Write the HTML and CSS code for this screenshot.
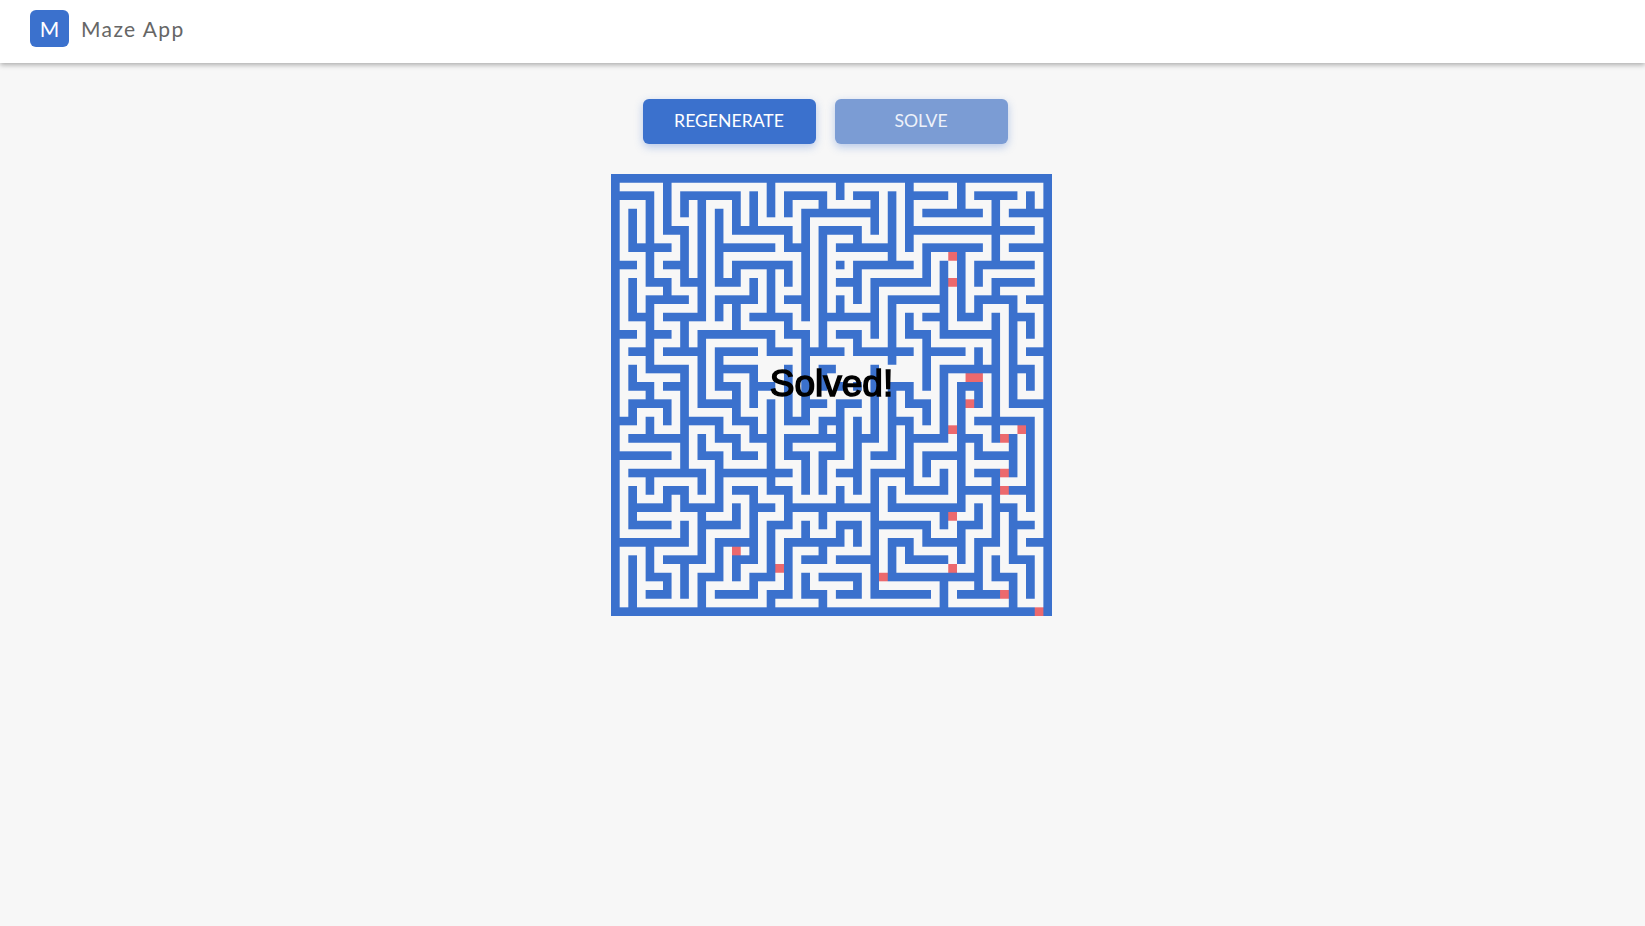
FILE: index.html
```html
<!DOCTYPE html>
<html lang="en">
<head>
    <meta charset="UTF-8">
    <meta name="viewport" content="width=device-width, initial-scale=1.0">
    <title>Maze App</title>
    <link rel="stylesheet" href="styles.css">
</head>
<body>

    <header class="topbar">
        <div class="logo">M</div>
        <span class="app-name">Maze App</span>
    </header>

    <main class="content">
        <div class="actions">
            <button class="btn">REGENERATE</button>
            <button class="btn btn-disabled">SOLVE</button>
        </div>

        <div class="maze-box">
            <canvas id="maze" width="510" height="510"></canvas>
            <div class="solved-label">Solved!</div>
        </div>
    </main>

    <script src="maze.js"></script>
</body>
</html>
```

FILE: styles.css
```css
body {
    margin: 0;
    min-height: 926px;
    background-color: #f7f7f7;
    font-family: "Lato", sans-serif;
}
.topbar {
    display: flex;
    align-items: center;
    height: 63px;
    padding-left: 30px;
    padding-bottom: 6px;
    box-sizing: border-box;
    background-color: #ffffff;
    box-shadow: 0 2px 5px rgba(0, 0, 0, 0.3);
}
.logo {
    display: flex;
    align-items: center;
    justify-content: center;
    width: 39px;
    height: 37px;
    border-radius: 6px;
    background-color: #3b71cd;
    color: #ffffff;
    font-size: 21px;
}
.app-name {
    margin-left: 12px;
    color: #666666;
    font-size: 21px;
    letter-spacing: 1.4px;
}
.content {
    display: flex;
    flex-direction: column;
    align-items: center;
}
.actions {
    display: flex;
    gap: 19px;
    margin-top: 36px;
    margin-left: 5px;
}
.btn {
    width: 173px;
    height: 45px;
    padding: 0 0 2px;
    border: none;
    border-radius: 6px;
    background-color: #3b71cd;
    color: #ffffff;
    font-family: "Lato", sans-serif;
    font-size: 17.6px;
    box-shadow: 0 3px 9px rgba(59, 113, 205, 0.35);
}
.btn-disabled {
    background-color: #7b9cd4;
    color: #eef2fa;
}
.maze-box {
    position: relative;
    width: 441.6px;
    height: 441.6px;
    margin-top: 30.4px;
    margin-left: 18px;
}
#maze {
    display: block;
    width: 100%;
    height: 100%;
}
.solved-label {
    position: absolute;
    top: 190px;
    left: 0;
    right: 0;
    text-align: center;
    color: #000000;
    font-family: "Liberation Sans", Arial, sans-serif;
    font-size: 37px;
    line-height: 40px;
    -webkit-text-stroke: 1.5px #000000;
}
```

FILE: maze.js
```js
// # wall, . corridor, R visited square
const rows = [
    "##########################" + "#########################",
    "#.....#...........#......." + "#.......#.....#.........#",
    "#####.#.#######.#.#.#####." + "#.###.#.#####.#.#####.#.#",
    "#...#.#.#.#...#.#.#.#...#." + "....#.#.#.....#...#...#.#",
    "#.#.#.#.#.#.#.#.#.#.#.####" + "#####.#.#.#######.#.#####",
    "#.#.#.#...#.#.#.#.....#..." + "....#.#.#.........#.....#",
    "#.#.#.###.#.#.#######.#.##" + "###.#.#.###############.#",
    "#.#.#...#.#.#.......#.#.#." + "..#...#.#.........#.....#",
    "#.#####.#.#.#######.###.#." + "#######.#.#######.#.#####",
    "#...#...#.#.#.........#.#." + "......#...#..R#...#.....#",
    "###.#.###.#.#.#######.#.#." + "#.#######.#.#.#.#######.#",
    "#...#...#.#.#.#...#.#.#.#." + "..#.......#.#.#.#.......#",
    "#.#.###.###.###.#.#.#.#.#." + "###.#######.#R#.#.#####.#",
    "#.#...#...#.....#.#...#.#." + "..#.#.......#.#...#.....#",
    "#.#.#####.#.#####.#.###.#." + "#.#.#.#######.#.#####.###",
    "#.#.#.....#.#.#...#...#.#." + "#...#.#.....#.#.#...#...#",
    "#.###.#####.#.#.#####.#.##" + "#####.#.#.###.###.#.###.#",
    "#...#...#.....#.....#...#." + "....#.#.#...#.....#.#.#.#",
    "###.###.#.#########.###.#." + "###.#.#.###.#######.#.#.#",
    "#...#...#.#.......#...#.#." + "..#...#...#.......#.#...#",
    "#.###.#####.#####.###.####" + "#.#######.#####.#.#.#.###",
    "#...#.....#.#.........#..." + "......#...#.....#.#.#...#",
    "#.#.#####.#.#####...#.#.##" + "....#.....#.#######.###.#",
    "#.#.....#.#.#...#...#.#.#." + "....#.....#.#..RR.#.#.#.#",
    "#.###.###.#.###.###.#.#.#." + "#.#.#.###.#.#.###.#.#.#.#",
    "#...#...#.#...#.#...#.#..." + "....#.#.#...#.#.#.#.#...#",
    "#.#####.#.#####.#.#.#.###." + "###.#.#.###.#.#R#.#.#####",
    "#.#...#.#.....#...#.#.#..." + "#...#.#...#.#.#...#.....#",
    "###.#.#.#####.###.#.###.##" + "#.#.#.###.#.#.#.#######.#",
    "#...#...#...#...#.#.....#." + "#.#.#.#.#...#R#...#..R#.#",
    "#.#######.#.###.###.######" + "#.###.#.#####.###.#R#.#.#",
    "#.......#.#...#...#.#....." + "#.#...#.#.....#.#...#.#.#",
    "#######.#.###.###.#.###.##" + "#.#.###.#.#####.#####.#.#",
    "#.......#...#.....#...#.#." + "..#.....#.#...#.....#.#.#",
    "#.#########.#########.#.#." + "###.#####.#.#.#.###R#.#.#",
    "#...#.....#.#.....#...#.#." + "..#.#...#...#.#...#...#.#",
    "#.#.#.###.#.#.###.###.#.#." + "#.#.#.#.#####.#####R###.#",
    "#.#...#.#...#...#...#....." + "#...#.#.......#...#...#.#",
    "#.#####.#####.#.###.######" + "#####.#########.#.###.#.#",
    "#.#.......#...#.#...#...#." + "....#.......#R..#.#.#...#",
    "#.#####.#.#####.#.###.#.#." + "###.#######.#.###.#.###.#",
    "#.......#.#.....#.#...#..." + "#.#.#.....#...#...#.#...#",
    "#########.#.#####.#.######" + "#.#.#.###.#####.###.#.###",
    "#...#.....#.#.R.#.#.#...#." + "....#.#.#.....#.#...#...#",
    "#.#.#.#####.#.###.#.#.###." + "#####.#.#####.#.#.#.###.#",
    "#.#.#...#...#.#...#R#....." + "....#.#......R..#.#...#.#",
    "#.#.###.#.###.#.###.#.#.##" + "###.#R###########.###.#.#",
    "#.#...#.#.#.....#...#.#..." + "..#.#.......#...#...#.#.#",
    "#.#.###.#.#.#####.###.###." + "###.#######.#.#####R#.#.#",
    "#.#.......#.......#.....#." + "............#.......#...#",
    "##########################" + "#######################R#"
];

const canvas = document.getElementById("maze");
const ctx = canvas.getContext("2d");
const cell = canvas.width / 51;

for (let r = 0; r < 51; r++) {
    for (let c = 0; c < 51; c++) {
        const ch = rows[r][c];
        if (ch === ".") continue;
        ctx.fillStyle = ch === "R" ? "#ec696d" : "#3b71cd";
        ctx.fillRect(c * cell, r * cell, cell, cell);
    }
}
```
